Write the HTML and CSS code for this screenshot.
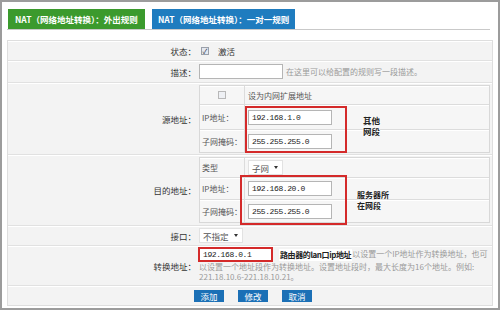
FILE: index.html
```html
<!DOCTYPE html>
<html lang="zh-CN">
<head>
    <meta charset="UTF-8">
    <title>NAT 一对一规则</title>
    <link rel="stylesheet" href="styles.css">
</head>
<body>
    <div class="frame">
        <div class="tabs">
            <div class="tab tab-green">NAT（网络地址转换）：外出规则</div>
            <div class="tab tab-blue">NAT（网络地址转换）：一对一规则</div>
        </div>

        <div class="form">
            <div class="row r-state">
                <div class="label">状态：</div>
                <div class="field">
                    <span class="chk on">✓</span>
                    <span class="chk-txt">激活</span>
                </div>
            </div>
            <div class="row r-desc">
                <div class="label">描述：</div>
                <div class="field">
                    <span class="txt-in"></span>
                    <span class="hint">在这里可以给配置的规则写一段描述。</span>
                </div>
            </div>
            <div class="row r-src">
                <div class="label">源地址：</div>
                <div class="field top">
                    <div class="sub">
                        <div class="sub-row h19">
                            <div class="sub-key center"><span class="chk"></span></div>
                            <div class="sub-val">设为内网扩展地址</div>
                        </div>
                        <div class="sub-row h25">
                            <div class="sub-key">IP地址：</div>
                            <div class="sub-val"><span class="ip">192.168.1.0</span></div>
                        </div>
                        <div class="sub-row h22 last">
                            <div class="sub-key">子网掩码：</div>
                            <div class="sub-val"><span class="ip">255.255.255.0</span></div>
                        </div>
                    </div>
                </div>
            </div>
            <div class="row r-dst">
                <div class="label">目的地址：</div>
                <div class="field top">
                    <div class="sub">
                        <div class="sub-row h20">
                            <div class="sub-key">类型</div>
                            <div class="sub-val"><span class="sel">子网<i class="caret"></i></span></div>
                        </div>
                        <div class="sub-row h22">
                            <div class="sub-key">IP地址：</div>
                            <div class="sub-val"><span class="ip">192.168.20.0</span></div>
                        </div>
                        <div class="sub-row h22 last">
                            <div class="sub-key">子网掩码：</div>
                            <div class="sub-val"><span class="ip">255.255.255.0</span></div>
                        </div>
                    </div>
                </div>
            </div>
            <div class="row r-port">
                <div class="label">接口：</div>
                <div class="field">
                    <span class="sel">不指定<i class="caret"></i></span>
                </div>
            </div>
            <div class="row r-conv">
                <div class="label">转换地址：</div>
                <div class="field wrap">
                    <span class="ip ip-red">192.168.0.1</span><span class="note-inline">路由器的lan口ip地址</span>以设置一个IP地址作为转换地址，也可<br>以设置一个地址段作为转换地址。设置地址段时，最大长度为16个地址。例如:<br>221.18.10.6-221.18.10.21。
                </div>
            </div>
            <div class="row r-btns">
                <div class="label"></div>
                <div class="field btns">
                    <span class="btn">添加</span>
                    <span class="btn">修改</span>
                    <span class="btn">取消</span>
                </div>
            </div>
        </div>

        <!-- 标注 -->
        <div class="mark mark-src"></div>
        <div class="mark mark-dst"></div>
        <div class="note note-src">其他<br>网段</div>
        <div class="note note-dst">服务器所<br>在网段</div>
    </div>
</body>
</html>
```

FILE: styles.css
```css
body {
    margin: 0;
    font-family: "Noto Sans CJK SC", "Noto Sans", sans-serif;
    color: #333;
}
.frame {
    position: relative;
    width: 500px;
    height: 310px;
    box-sizing: border-box;
    border: 2px solid #9c9c9c;
    background: #fff;
    padding: 7px 5px 0 5px;
}
.tabs {
    display: flex;
    gap: 7px;
    padding-left: 1px;
    margin-right: 3px;
    border-bottom: 1px solid #c9c9c9;
}
.tab {
    height: 20px;
    line-height: 20px;
    box-sizing: border-box;
    padding-left: 7px;
    color: #fff;
    font-size: 8.5px;
    font-weight: bold;
    white-space: nowrap;
}
.tab-green { width: 137px; background: #3b9a2d; }
.tab-blue { width: 143px; background: #1f7cbf; padding-left: 6px; }

.form {
    width: 486px;
    box-sizing: border-box;
    margin-top: 10px;
    border: 1px solid #dedede;
    background: #f3f3f3;
}
.row {
    display: flex;
    box-sizing: border-box;
    border-bottom: 1px solid #e1e1e1;
    box-shadow: inset 0 1px 0 #fff;
}
.row.r-btns { border-bottom: none; }
.r-state { height: 20px; }
.r-desc { height: 22px; }
.r-src { height: 72px; }
.r-dst { height: 71px; }
.r-port { height: 20px; }
.r-conv { height: 40px; }
.r-btns { height: 19px; }

.label {
    width: 189px;
    flex: none;
    box-sizing: border-box;
    padding-right: 1px;
    display: flex;
    align-items: center;
    justify-content: flex-end;
    font-size: 8.5px;
    color: #333;
}
.field {
    flex: 1;
    display: flex;
    align-items: center;
    padding-left: 2px;
    font-size: 8.5px;
}
.field.top {
    align-items: flex-start;
    padding-top: 2px;
}
.hint {
    margin-left: 3px;
    font-size: 8px;
    color: #9a9a9a;
}
.chk {
    display: inline-block;
    width: 8px;
    height: 8px;
    box-sizing: border-box;
    border: 1px solid #b8b8b8;
    background: #eef0f4;
    font-size: 7px;
    line-height: 6px;
    text-align: center;
    color: #334;
}
.chk.on {
    margin-left: 2px;
    border-color: #9aa0aa;
    background: #e4e8f0;
}
.chk-txt { margin-left: 9px; }
.txt-in {
    width: 84px;
    height: 15px;
    box-sizing: border-box;
    border: 1px solid #b5b5b5;
    background: #fff;
}

.sub {
    width: 291px;
    box-sizing: border-box;
    border: 1px solid #d8d8d8;
    background: #f6f6f6;
}
.sub-row {
    display: flex;
    box-sizing: border-box;
    border-bottom: 1px solid #dcdcdc;
    box-shadow: inset 0 1px 0 #fff;
}
.sub-row.last { border-bottom: none; }
.h19 { height: 19px; }
.h20 { height: 20px; }
.h22 { height: 22px; }
.h25 { height: 25px; }
.sub-key {
    width: 45px;
    flex: none;
    box-sizing: border-box;
    border-right: 1px solid #dcdcdc;
    padding-left: 2px;
    display: flex;
    align-items: center;
    font-size: 8px;
    color: #555;
    white-space: nowrap;
}
.sub-key.center { justify-content: center; padding-left: 0; }
.sub-val {
    flex: 1;
    display: flex;
    align-items: center;
    padding-left: 3px;
    font-size: 8px;
    color: #555;
}
.ip {
    display: inline-block;
    width: 84px;
    height: 15px;
    box-sizing: border-box;
    border: 1px solid #b5b5b5;
    background: #fff;
    padding-left: 3px;
    font-family: "Liberation Mono", monospace;
    font-size: 8px;
    letter-spacing: -0.4px;
    line-height: 13px;
    color: #222;
}
.sel {
    display: inline-flex;
    align-items: center;
    height: 13px;
    padding: 0 4px 0 3px;
    background: #fff;
    border: 1px solid #e2e2e2;
    font-size: 8.5px;
    color: #555;
}
.caret {
    display: inline-block;
    margin-left: 5px;
    border-left: 2.5px solid transparent;
    border-right: 2.5px solid transparent;
    border-top: 3px solid #333;
}

.field.wrap {
    display: block;
    padding-top: 1px;
    white-space: nowrap;
    font-size: 8px;
    line-height: 10px;
    color: #9a9a9a;
}
.ip-red {
    width: 75px;
    margin-left: -1px;
    border: 2px solid #d42a2a;
    line-height: 11px;
    vertical-align: middle;
    padding-left: 3px;
}
.note-inline {
    display: inline-block;
    margin-left: 6px;
    padding: 0 1px;
    background: #fff;
    font-size: 8px;
    font-weight: bold;
    letter-spacing: -0.4px;
    line-height: 12px;
    color: #222;
    vertical-align: middle;
}

.btns { gap: 14px; padding-left: 0; margin-left: -3px; }
.btn {
    width: 30px;
    height: 12px;
    line-height: 12px;
    text-align: center;
    background: #1b70b6;
    color: #fff;
    font-size: 8.5px;
}

/* 红框和说明文字 */
.mark {
    position: absolute;
    box-sizing: border-box;
    border: 2px solid #d42a2a;
}
.mark-src { left: 243px; top: 104px; width: 102px; height: 47px; }
.mark-dst { left: 238px; top: 173px; width: 107px; height: 50px; }
.note {
    position: absolute;
    font-size: 8.5px;
    font-weight: bold;
    color: #222;
    line-height: 11px;
    text-shadow: 0 0 2px #fff, 0 0 2px #fff;
}
.note-src { left: 361px; top: 113px; }
.note-dst { left: 355px; top: 187px; font-size: 8px; }
```
